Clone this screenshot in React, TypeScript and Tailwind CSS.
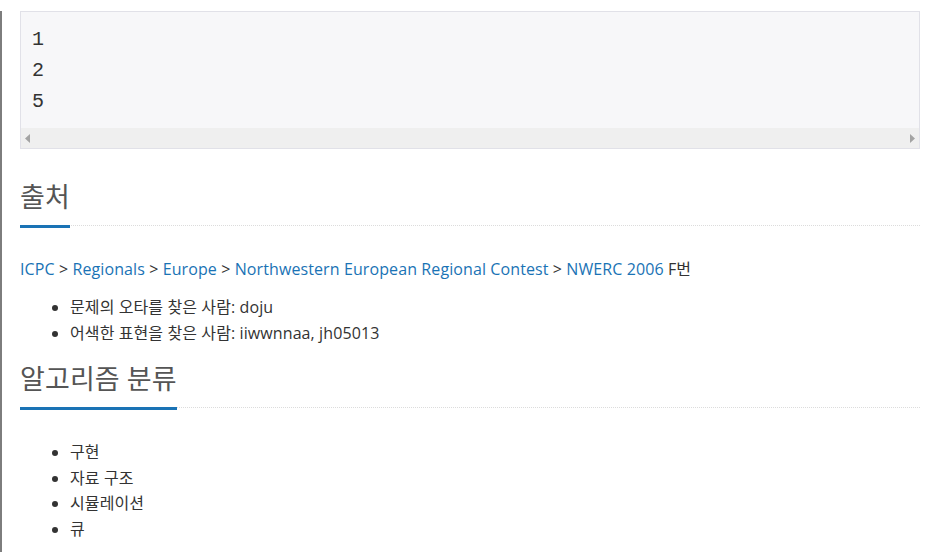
import React from "react";

// ---------------- data ----------------
const sampleLines = ["1", "2", "5"];

const crumbs = [
  "ICPC",
  "Regionals",
  "Europe",
  "Northwestern European Regional Contest",
  "NWERC 2006",
];

const credits = [
  "문제의 오타를 찾은 사람: doju",
  "어색한 표현을 찾은 사람: iiwwnnaa, jh05013",
];

const tags = ["구현", "자료 구조", "시뮬레이션", "큐"];

const font = "font-['Open_Sans','Noto_Sans_CJK_KR',sans-serif]";

// ---------------- pieces ----------------
const Headline: React.FC<{ title: string; className?: string }> = ({ title, className }) => (
  <div className={`flex border-b border-dotted border-[#dcdcdc] ${className ?? ""}`}>
    <h2 className="-mb-[3px] border-b-[3px] border-[#1a73b5] pb-[13px] text-[27px] leading-[30px] font-normal text-[#555]">
      {title}
    </h2>
  </div>
);

const SampleBox: React.FC = () => (
  <div className="mt-[11px] w-[900px] border border-[#e1e1e8] bg-[#f7f7f9]">
    <pre className="pt-[12px] pb-[11px] pl-[11px] font-['Liberation_Mono',monospace] text-[20px] leading-[31px] text-[#333]">
      {sampleLines.join("\n")}
    </pre>
    {/* horizontal scrollbar */}
    <div className="flex h-[20px] items-center justify-between bg-[#efefef] px-[4px]">
      <svg width="5" height="9" viewBox="0 0 5 9">
        <path d="M5 0 L0 4.5 L5 9 Z" fill="#a3a3a3" />
      </svg>
      <svg width="5" height="9" viewBox="0 0 5 9">
        <path d="M0 0 L5 4.5 L0 9 Z" fill="#a3a3a3" />
      </svg>
    </div>
  </div>
);

// ---------------- page ----------------
export default function App() {
  return (
    <div className={`min-h-screen border-l-2 border-[#7d7d7d] bg-white pl-[18px] ${font}`}>
      <div className="w-[900px] pb-4 text-[16px] tracking-[0.1px] text-[#333]">
        <SampleBox />

        <Headline title="출처" className="mt-[33px]" />

        <p className="mt-[30px] leading-[26px]">
          {crumbs.map((c, i) => (
            <React.Fragment key={c}>
              {i > 0 && <span> &gt; </span>}
              <a className="text-[#1a73b5]">{c}</a>
            </React.Fragment>
          ))}
          <span> F번</span>
        </p>

        <ul className="mt-[12px] list-disc pl-[50px] leading-[26px]">
          {credits.map(c => (
            <li key={c}>{c}</li>
          ))}
        </ul>

        <Headline title="알고리즘 분류" className="mt-[18px]" />

        <ul className="mt-[32px] list-disc pl-[50px] leading-[25.7px]">
          {tags.map(t => (
            <li key={t}>{t}</li>
          ))}
        </ul>
      </div>
    </div>
  );
}
